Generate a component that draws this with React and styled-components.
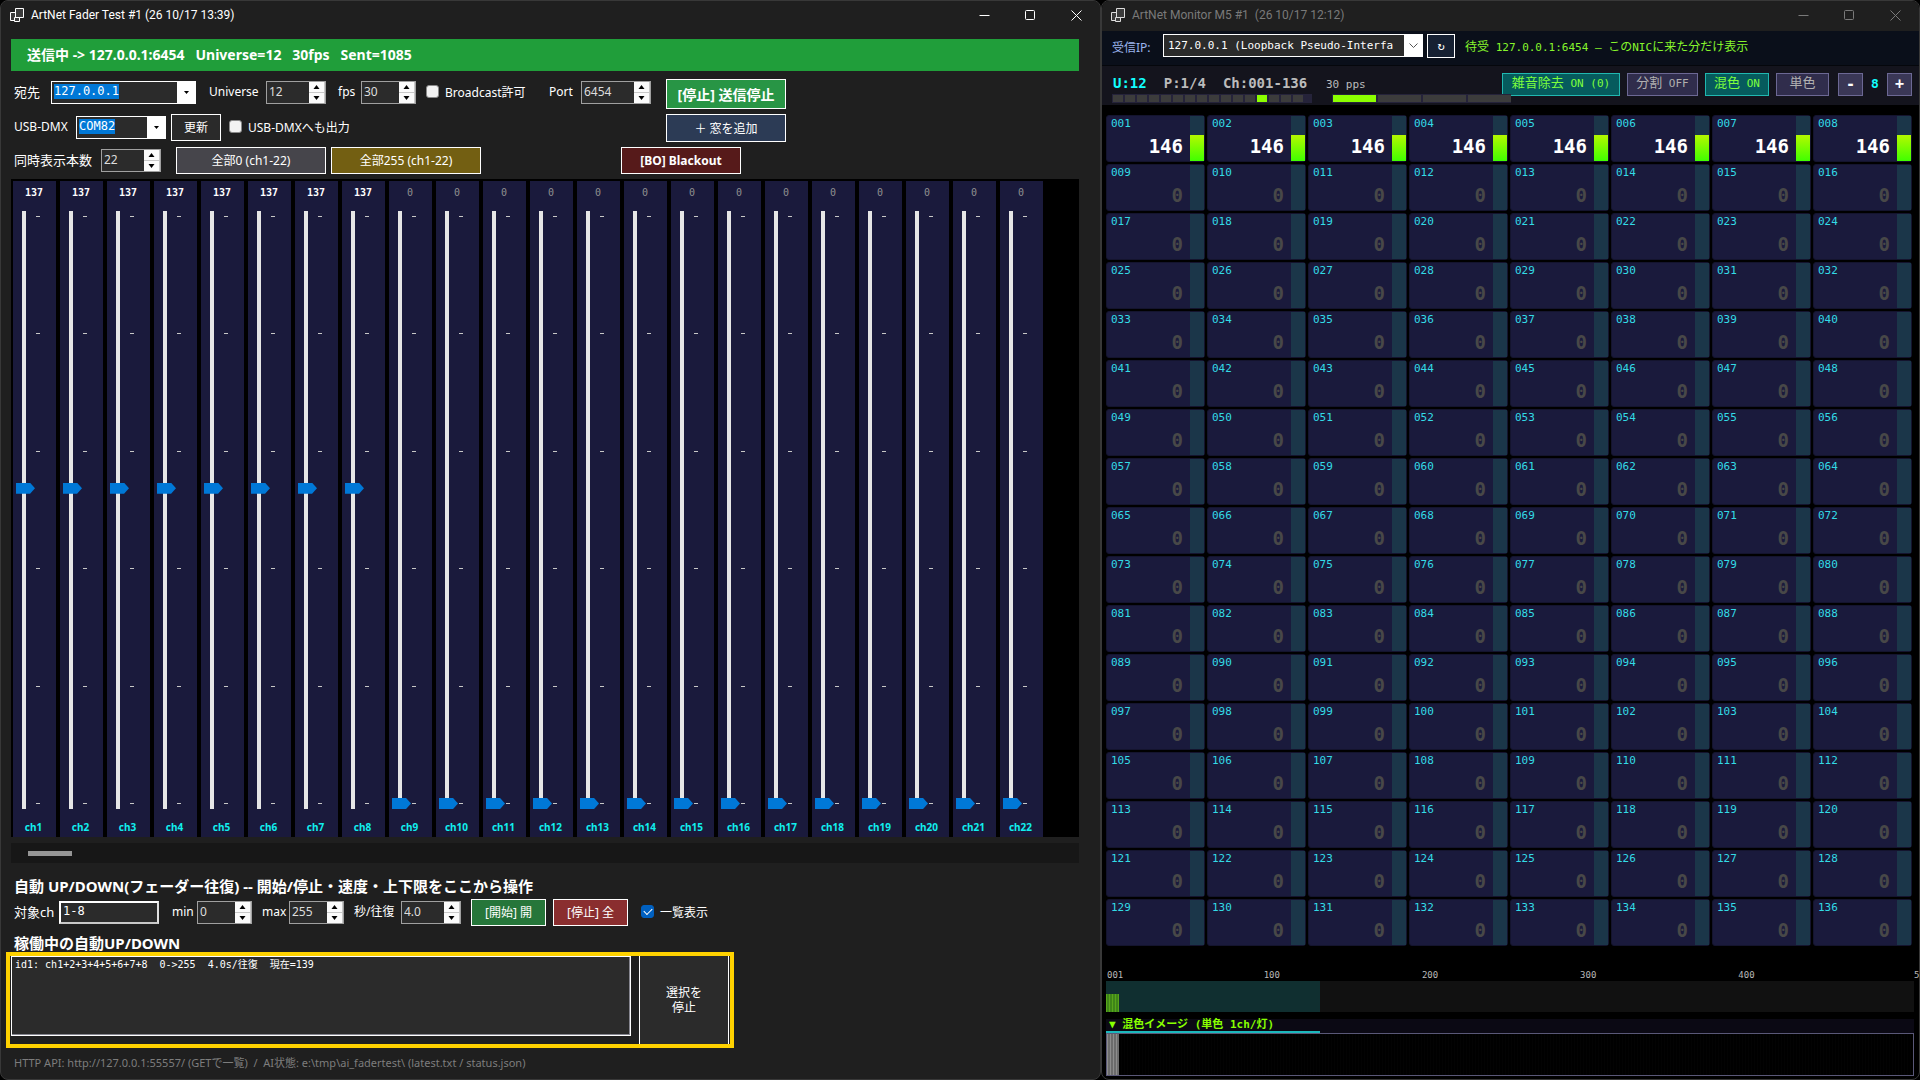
import React, { useState } from "react";
import styled, { createGlobalStyle, css } from "styled-components";

const sans = `"Noto Sans", "Noto Sans CJK JP", sans-serif`;
const mono = `"DejaVu Sans Mono", "Noto Sans CJK JP", monospace`;

const GlobalStyle = createGlobalStyle`
  * {
    box-sizing: border-box;
  }
  body {
    margin: 0;
    background: #000;
    color: #fff;
    font-family: ${sans};
    font-size: 12px;
    overflow: hidden;
  }
  button, input, select {
    margin: 0;
    padding: 0;
    font: inherit;
    color: inherit;
    border-radius: 0;
    outline: none;
  }
  p, h2, ul {
    margin: 0;
    padding: 0;
  }
`;

const Desktop = styled.div`
  display: grid;
  grid-template-columns: 1101fr 819fr;
  height: 100vh;
`;

const Window = styled.section`
  display: flex;
  flex-direction: column;
  min-width: 0;
  border: 1px solid #383838;
  border-radius: 8px;
  background: ${({ $bg }) => $bg};
  overflow: hidden;
`;

const TitleBar = styled.header`
  display: flex;
  align-items: flex-start;
  flex: none;
  height: 30px;
  padding: 0 1px 0 9px;
  background: #1f1f1f;
  color: ${({ $active }) => ($active ? "#fff" : "#7a7a7a")};
  white-space: pre;

  & > svg {
    margin-top: 7px;
  }
`;

const TitleText = styled.span`
  flex: 1;
  margin-left: 7px;
  font-family: Roboto, "Noto Sans CJK JP", sans-serif;
  line-height: 29px;
`;

const CaptionButton = styled.button`
  display: grid;
  place-items: center;
  width: 46px;
  height: 29px;
  border: 0;
  background: none;
`;

const FaderBody = styled.div`
  display: flex;
  flex-direction: column;
  flex: 1;
  min-height: 0;
  padding: 8px 21px 0 10px;
`;

const StatusBanner = styled.p`
  flex: none;
  padding-left: 16px;
  margin-bottom: 8px;
  background: #209e3a;
  font-size: 14px;
  font-weight: 700;
  line-height: 32px;
  white-space: pre;
`;

const Rows = styled.div`
  display: grid;
  gap: 5px;
  margin-bottom: 5px;
`;

const ControlRow = styled.div`
  display: grid;
  grid-template-columns: ${({ $columns }) => $columns};
  align-items: start;
  min-height: 27px;
  padding-left: 3px;
  white-space: nowrap;
`;

const Label = styled.label`
  font-size: ${({ $large }) => ($large ? "13px" : "12px")};
  line-height: 26px;
`;

const CheckLabel = styled.label`
  display: flex;
  align-items: center;
  gap: 6px;
  height: 25px;
`;

const CheckBox = styled.input.attrs({ type: "checkbox" })`
  appearance: none;
  width: 13px;
  height: 13px;
  border: 1px solid #8a8a8a;
  border-radius: 3px;
  background: #f3f3f3;

  &:checked {
    border-color: #0060c0;
    background: #0060c0;
  }
  &:checked::before {
    content: "";
    display: block;
    width: 7px;
    height: 4px;
    margin: 2px;
    border: solid #fff;
    border-width: 0 0 1px 1px;
    transform: rotate(-45deg);
  }
`;

const PushButton = styled.button`
  width: ${({ $width }) => $width}px;
  height: ${({ $height }) => $height || 27}px;
  padding-bottom: 1px;
  border: 1px solid #fff;
  background: ${({ $bg }) => $bg || "#2a2a2a"};
  font-size: ${({ $large }) => ($large ? "14px" : "12px")};
  font-weight: ${({ $bold }) => ($bold ? 700 : 400)};
  white-space: nowrap;
`;

const ComboBox = styled.div`
  display: grid;
  grid-template-columns: 1fr 18px;
  width: ${({ $width }) => $width}px;
  height: 23px;
  margin-top: ${({ $top }) => $top || 0}px;
  border: 1px solid #fff;
  background: #2b2b2b;
`;

const ComboSelect = styled.select`
  grid-area: 1 / 1 / 2 / 3;
  appearance: none;
  width: 100%;
  padding: 0 18px 3px 2px;
  border: 0;
  background: none;
  font-family: ${mono};
  ${({ $selected }) =>
    $selected
      ? css`
          background: linear-gradient(#0078d7, #0078d7) 2px 2px / ${$selected}px 15px no-repeat;
        `
      : css`
          padding: 0 18px 1px 4px;
          font-size: 11px;
        `}
`;

const ComboArrow = styled.span`
  grid-area: 1 / 2 / 2 / 3;
  display: grid;
  place-items: center;
  background: #fff;
  pointer-events: none;
`;

const SpinBox = styled.div`
  display: grid;
  grid-template-columns: 1fr 16px;
  width: ${({ $width }) => $width}px;
  height: 23px;
  margin-top: 2px;
  border: 1px solid #a0a0a0;
  background: #2b2b2b;
`;

const SpinInput = styled.input`
  width: 100%;
  min-width: 0;
  padding: 0 0 3px 2px;
  border: 0;
  background: none;
  color: #ddd;
`;

const SpinButtons = styled.span`
  display: grid;
  grid-template-rows: 1fr 1fr;
  gap: 1px;
  padding-right: 1px;
  background: #c8c8c8;
`;

const SpinButton = styled.button`
  display: grid;
  place-items: center;
  border: 0;
  background: #fbfbfb;
`;

const TextBox = styled.input`
  width: 100px;
  height: 23px;
  margin-top: 2px;
  padding: 0 0 3px 2px;
  border: 2px solid #fff;
  border-bottom-color: #c8c8c8;
  border-right-color: #e0e0e0;
  background: #2b2b2b;
  font-family: ${mono};
  font-size: 12px;
`;

const FaderPanel = styled.div`
  display: flex;
  gap: 4px;
  flex: 1;
  min-height: 0;
  padding: 2px 0 0 2px;
  background: #000;
`;

const FaderStrip = styled.div`
  display: grid;
  grid-template-columns: 19px 1fr;
  grid-template-rows: 30px 1fr 28px;
  column-gap: 1px;
  width: 43px;
  padding-left: 3px;
  background: #1a1a3c;
`;

const FaderValue = styled.output`
  grid-column: 1 / 3;
  padding-right: 4px;
  font-family: ${mono};
  font-size: 10px;
  font-weight: ${({ $on }) => ($on ? 700 : 400)};
  line-height: 24px;
  text-align: center;
  color: ${({ $on }) => ($on ? "#fff" : "#909090")};
`;

const FaderInput = styled.input.attrs({ type: "range", min: 0, max: 255 })`
  appearance: none;
  writing-mode: vertical-lr;
  direction: rtl;
  width: 19px;
  height: 100%;
  background: linear-gradient(#e6e6e6, #e6e6e6) 6px 0 / 4px 100% no-repeat;

  &::-webkit-slider-runnable-track {
    width: 19px;
    height: 100%;
  }
  &::-webkit-slider-thumb {
    appearance: none;
    width: 19px;
    height: 11px;
    background: #0078d7;
    clip-path: polygon(0 0, 74% 0, 100% 50%, 74% 100%, 0 100%);
  }
`;

const Ticks = styled.div`
  display: flex;
  flex-direction: column;
  justify-content: space-between;
  padding: 5px 0;
`;

const Tick = styled.i`
  width: 4px;
  height: 1px;
  background: #c8c8c8;
`;

const FaderName = styled.label`
  grid-column: 1 / 3;
  padding-right: 5px;
  font-size: 10px;
  font-weight: 700;
  line-height: 36px;
  text-align: center;
  color: #1ee;
`;

const ScrollTrack = styled.div`
  flex: none;
  height: 20px;
  margin-top: 6px;
  padding: 8px 17px;
  background: #171717;
`;

const ScrollThumb = styled.div`
  width: 44px;
  height: 5px;
  background: #969696;
`;

const Heading = styled.h2`
  margin: ${({ $spaced }) => ($spaced ? "14px 0 4px" : "8px 0 0")};
  padding-left: 3px;
  font-size: 15px;
  font-weight: 700;
  line-height: 18px;
  white-space: nowrap;
`;

const Highlight = styled.div`
  display: flex;
  gap: 8px;
  width: 728px;
  height: 96px;
  margin-left: -5px;
  padding-left: 1px;
  border: 4px solid #ffd200;
`;

const JobList = styled.ul`
  width: 620px;
  height: 80px;
  padding: 0 3px;
  border: 1px solid #fff;
  box-shadow: inset -1px -1px #85858f;
  background: #2b2b2b;
  list-style: none;
  font-family: ${mono};
  font-size: 10px;
  line-height: 15px;
  white-space: pre;
`;

const StopJobButton = styled.button`
  width: 90px;
  border: solid #fff;
  border-width: 0 1px;
  background: #2b2b2b;
  line-height: 15px;
`;

const FootNote = styled.p`
  height: 31px;
  padding-left: 3px;
  color: #7d7d7d;
  font-size: 11px;
  line-height: 29px;
  white-space: pre;
`;

const SourceBar = styled.div`
  display: flex;
  flex: none;
  align-items: center;
  height: 35px;
  padding: 0 7px 5px 10px;
  border-bottom: 1px solid #05070c;
  background: #0a0f1a;
  white-space: pre;
`;

const SourceLabel = styled.label`
  width: 51px;
  padding-top: 2px;
  color: #9ab4ec;
`;

const ReloadButton = styled.button`
  width: 28px;
  height: 24px;
  margin: 0 10px 0 4px;
  border: 1px solid #fff;
  background: #162032;
  font-family: ${mono};
`;

const ListenText = styled.span`
  color: #86f52c;
  font-family: ${mono};
  font-size: 12px;
`;

const Small = styled.span`
  font-size: 11px;
`;

const MonitorBar = styled.div`
  display: flex;
  flex: none;
  height: 39px;
  padding: 6px 7px 0 10px;
  background: #14141d;
  font-family: ${mono};
`;

const Meter = styled.div`
  position: relative;
  display: grid;
  grid-template-rows: 22px 9px;
  width: ${({ $width }) => $width}px;
  margin-right: ${({ $after }) => $after}px;
`;

const MeterText = styled.div`
  display: flex;
  gap: 17px;
  padding-left: 1px;
  color: #bbb;
  font-size: 14px;
  font-weight: 700;
  line-height: 22px;
`;

const Universe = styled.span`
  color: #1ff;
`;

const Rate = styled.span`
  margin-left: -7px;
  padding-top: 3px;
  font-size: 11px;
  font-weight: 400;
  line-height: 20px;
`;

const Segments = styled.div`
  display: grid;
  grid-template-columns: repeat(${({ $count }) => $count}, 1fr);
  gap: 2px;
  padding: 1px ${({ $tail }) => $tail || 0}px 1px 1px;
  background: #25233a;
`;

const Segment = styled.i`
  background: ${({ $on }) => ($on ? "#8cff00" : "#3c3c3c")};
`;

const ModeButtons = styled.div`
  display: flex;
  gap: 7px;
  margin: 1px 0 0 auto;
`;

const ModeButton = styled.button`
  width: ${({ $width }) => $width}px;
  height: 23px;
  padding-bottom: 4px;
  border: 1px solid ${({ $on }) => ($on ? "#20b8b0" : "#6c6894")};
  background: ${({ $on }) => ($on ? "#065b5d" : "#302d4c")};
  color: ${({ $on }) => ($on ? "#7dff3c" : "#b0b0b0")};
  font-size: 13px;
  line-height: 17px;
  white-space: nowrap;
`;

const Stepper = styled.div`
  display: grid;
  grid-template-columns: 25px 24px 25px;
  margin-left: 2px;
  line-height: 21px;
  text-align: center;
`;

const StepButton = styled.button`
  height: 23px;
  border: 1px solid #6c6894;
  background: #3a3756;
  font-size: 15px;
  font-weight: 700;
  line-height: 19px;
`;

const StepValue = styled.output`
  color: #1ff;
  font-size: 13px;
  font-weight: 700;
`;

const ChannelGrid = styled.div`
  display: grid;
  grid-template-columns: repeat(8, 1fr);
  grid-auto-rows: 1fr;
  gap: 2px;
  flex: 1;
  min-height: 0;
  padding: 10px 7px 0 4px;
  font-family: ${mono};
`;

const Cell = styled.div`
  display: grid;
  grid-template-columns: 1fr 14px;
  grid-template-rows: 16px 1fr;
  min-height: 0;
  border: 1px solid #14142e;
  border-radius: 3px;
  background: #1a1a3c;
`;

const CellIndex = styled.span`
  padding-left: 4px;
  color: #33dbe6;
  font-size: 11px;
  line-height: 16px;
`;

const CellValue = styled.span`
  grid-column: 1;
  padding-right: 7px;
  color: ${({ $on }) => ($on ? "#fff" : "#484848")};
  font-size: 19px;
  font-weight: 700;
  line-height: 28px;
  text-align: right;
`;

const Gauge = styled.div`
  grid-area: 1 / 2 / 3 / 3;
  display: flex;
  align-items: flex-end;
  background: #1b3649;
`;

const GaugeFill = styled.i`
  width: 100%;
  background: linear-gradient(#b4f800, #40ff00);
`;

const Overview = styled.div`
  flex: none;
  padding: 23px 5px 3px 4px;
  font-family: ${mono};
`;

const Scale = styled.div`
  display: grid;
  grid-template-columns: 99fr 100fr 100fr 100fr 111fr 0;
  padding-left: 1px;
  color: #b8b8b8;
  font-size: 9px;
  line-height: 12px;
`;

const LevelMap = styled.div`
  display: flex;
  align-items: flex-end;
  height: 31px;
  background: linear-gradient(90deg, #102f30 26.5%, #111 26.5%);
`;

const LevelBars = styled.i`
  width: 13px;
  height: 18px;
  background: repeating-linear-gradient(90deg, #57a51a 0 1px, #3e8518 1px 3px);
`;

const MixTitle = styled.p`
  height: 14px;
  margin-top: 7px;
  padding-left: 3px;
  background:
    linear-gradient(#1bb8bc, #1bb8bc) 0 100% / 26.5% 2px no-repeat,
    #0b0914;
  color: #8f0;
  font-size: 11px;
  font-weight: 700;
  line-height: 11px;
`;

const MixStrip = styled.div`
  height: 43px;
  border: 1px solid #5a5878;
  background: repeating-linear-gradient(90deg, #000 0 2px, #030303 2px 3px);
`;

const MixLamps = styled.i`
  display: block;
  width: 12px;
  height: 100%;
  background: repeating-linear-gradient(90deg, #8c8c8c 0 1px, #6b6b6b 1px 3px);
`;

const AppIcon = ({ active }) => (
  <svg width="14" height="14" viewBox="0 0 14 14" fill="#3b3b3b" stroke={active ? "#fff" : "#ddd"}>
    <path d="M.5 4.5h5v8h-5z" />
    <path d="M5.5.5h8v9h-8z" />
    <path d="M4.5 9.5h5v4h-5z" />
  </svg>
);

const Triangle = ({ up }) => (
  <svg width="7" height="4" viewBox="0 0 7 4" fill="#000">
    <path d={up ? "M3.5 0 6.5 4H.5z" : "M.5 0h6l-3 4z"} />
  </svg>
);

const WindowTitle = ({ text, active }) => (
  <TitleBar $active={active}>
    <AppIcon active={active} />
    <TitleText>{text}</TitleText>
    <CaptionButton aria-label="Minimize">
      <svg width="11" height="11" stroke="currentColor">
        <path d="M.5 5.5h10" />
      </svg>
    </CaptionButton>
    <CaptionButton aria-label="Maximize">
      <svg width="11" height="11" fill="none" stroke="currentColor">
        <rect x=".5" y=".5" width="9" height="9" rx="1" />
      </svg>
    </CaptionButton>
    <CaptionButton aria-label="Close">
      <svg width="11" height="11" stroke="currentColor">
        <path d="M.5.5l10 10M10.5.5l-10 10" />
      </svg>
    </CaptionButton>
  </TitleBar>
);

const Combo = ({ id, value, width, selected }) => (
  <ComboBox $width={width} $top={2}>
    <ComboSelect id={id} $selected={selected}>
      <option>{value}</option>
    </ComboSelect>
    <ComboArrow>
      <svg width="5" height="3" viewBox="0 0 5 3">
        <path d="M0 0h5L2.5 3z" />
      </svg>
    </ComboArrow>
  </ComboBox>
);

const Spin = ({ id, start, width, step = 1 }) => {
  const digits = step < 1 ? 1 : 0;
  const [value, setValue] = useState(start);
  const move = (by) => setValue((v) => (Number(v) + by).toFixed(digits));
  return (
    <SpinBox $width={width}>
      <SpinInput id={id} value={value} onChange={(e) => setValue(e.target.value)} />
      <SpinButtons>
        <SpinButton aria-label="Up" onClick={() => move(step)}>
          <Triangle up />
        </SpinButton>
        <SpinButton aria-label="Down" onClick={() => move(-step)}>
          <Triangle />
        </SpinButton>
      </SpinButtons>
    </SpinBox>
  );
};

const Fader = ({ channel, start }) => {
  const [value, setValue] = useState(start);
  const id = `fader-${channel}`;
  return (
    <FaderStrip>
      <FaderValue $on={value > 0}>{value}</FaderValue>
      <FaderInput id={id} value={value} onChange={(e) => setValue(Number(e.target.value))} />
      <Ticks>
        {Array.from({ length: 6 }, (_, i) => (
          <Tick key={i} />
        ))}
      </Ticks>
      <FaderName htmlFor={id}>ch{channel}</FaderName>
    </FaderStrip>
  );
};

const FaderWindow = () => (
  <Window $bg='#1f1f1f'>
    <WindowTitle active text='ArtNet Fader Test #1 (26 10/17 13:39)' />
    <FaderBody>
      <StatusBanner>{"送信中 -> 127.0.0.1:6454   Universe=12   30fps   Sent=1085"}</StatusBanner>
      <Rows>
        <ControlRow $columns='37px 158px 57px 72px 23px 65px 123px 32px 85px 120px'>
          <Label $large htmlFor='dest'>宛先</Label>
          <Combo id='dest' value='127.0.0.1' width={145} selected={65} />
          <Label htmlFor='universe'>Universe</Label>
          <Spin id='universe' start='12' width={60} />
          <Label htmlFor='fps'>fps</Label>
          <Spin id='fps' start='30' width={55} />
          <CheckLabel>
            <CheckBox />
            Broadcast許可
          </CheckLabel>
          <Label htmlFor='port'>Port</Label>
          <Spin id='port' start='6454' width={70} />
          <PushButton $width={120} $height={30} $bg='#289545' $bold $large>[停止] 送信停止</PushButton>
        </ControlRow>
        <ControlRow $columns='62px 95px 58px 437px 120px'>
          <Label htmlFor='dmx'>USB-DMX</Label>
          <Combo id='dmx' value='COM82' width={90} selected={36} />
          <PushButton $width={50}>更新</PushButton>
          <CheckLabel>
            <CheckBox />
            USB-DMXへも出力
          </CheckLabel>
          <PushButton $width={120} $height={28} $bg='#2c3b55'>＋ 窓を追加</PushButton>
        </ControlRow>
        <ControlRow $columns='87px 75px 155px 290px 120px'>
          <Label $large htmlFor='count'>同時表示本数</Label>
          <Spin id='count' start='22' width={60} />
          <PushButton $width={150} $bg='#46454b'>全部0 (ch1-22)</PushButton>
          <PushButton $width={150} $bg='#735f12'>全部255 (ch1-22)</PushButton>
          <PushButton $width={120} $bg='#561a1a' $bold>[BO] Blackout</PushButton>
        </ControlRow>
      </Rows>
      <FaderPanel>
        {Array.from({ length: 22 }, (_, i) => (
          <Fader key={i} channel={i + 1} start={i < 8 ? 137 : 0} />
        ))}
      </FaderPanel>
      <ScrollTrack>
        <ScrollThumb />
      </ScrollTrack>
      <Heading $spaced>自動 UP/DOWN(フェーダー往復) -- 開始/停止・速度・上下限をここから操作</Heading>
      <ControlRow $columns='45px 113px 25px 65px 27px 65px 47px 70px 82px 88px auto'>
        <Label $large htmlFor='target'>対象ch</Label>
        <TextBox id='target' defaultValue='1-8' />
        <Label htmlFor='min'>min</Label>
        <Spin id='min' start='0' width={55} />
        <Label htmlFor='max'>max</Label>
        <Spin id='max' start='255' width={55} />
        <Label htmlFor='period'>秒/往復</Label>
        <Spin id='period' start='4.0' width={60} step={0.5} />
        <PushButton $width={75} $bg='#26763a'>[開始] 開</PushButton>
        <PushButton $width={75} $bg='#8a2e2f'>[停止] 全</PushButton>
        <CheckLabel>
          <CheckBox defaultChecked />
          一覧表示
        </CheckLabel>
      </ControlRow>
      <Heading>稼働中の自動UP/DOWN</Heading>
      <Highlight>
        <JobList>
          <li>{"id1: ch1+2+3+4+5+6+7+8  0->255  4.0s/往復  現在=139"}</li>
        </JobList>
        <StopJobButton>
          選択を
          <br />
          停止
        </StopJobButton>
      </Highlight>
      <FootNote>
        {"HTTP API: http://127.0.0.1:55557/ (GETで一覧)  /  AI状態: e:\\tmp\\ai_fadertest\\ (latest.txt / status.json)"}
      </FootNote>
    </FaderBody>
  </Window>
);

const ChannelCell = ({ channel, value }) => (
  <Cell>
    <CellIndex>{String(channel).padStart(3, "0")}</CellIndex>
    <CellValue $on={value > 0}>{value}</CellValue>
    <Gauge>
      <GaugeFill style={{ height: `${(value / 255) * 100}%` }} />
    </Gauge>
  </Cell>
);

const MonitorWindow = () => (
  <Window $bg='#000'>
    <WindowTitle text='ArtNet Monitor M5 #1  (26 10/17 12:12)' />
    <SourceBar>
      <SourceLabel htmlFor='nic'>受信IP:</SourceLabel>
      <ComboBox $width={260}>
        <ComboSelect id='nic'>
          <option>127.0.0.1 (Loopback Pseudo-Interfa</option>
        </ComboSelect>
        <ComboArrow>
          <svg width="9" height="6" fill="none" stroke="#555">
            <path d="M.5.5l4 4 4-4" />
          </svg>
        </ComboArrow>
      </ComboBox>
      <ReloadButton aria-label='Reload'>↻</ReloadButton>
      <ListenText>
        待受<Small> 127.0.0.1:6454 — </Small>この<Small>NIC</Small>に来た分だけ表示
      </ListenText>
    </SourceBar>
    <MonitorBar>
      <Meter $width={200} $after={20}>
        <MeterText>
          <Universe>U:12</Universe>
          <span>P:1/4</span>
          <span>Ch:001-136</span>
        </MeterText>
        <Segments $count={16} $tail={9}>
          {Array.from({ length: 16 }, (_, i) => (
            <Segment key={i} $on={i === 12} />
          ))}
        </Segments>
      </Meter>
      <Meter $width={179} $after={-9}>
        <MeterText>
          <Rate>30 pps</Rate>
        </MeterText>
        <Segments $count={4}>
          {Array.from({ length: 4 }, (_, i) => (
            <Segment key={i} $on={i === 0} />
          ))}
        </Segments>
      </Meter>
      <ModeButtons>
        <ModeButton $on $width={118}>雑音除去<Small> ON (0)</Small></ModeButton>
        <ModeButton $width={71}>分割<Small> OFF</Small></ModeButton>
        <ModeButton $on $width={64}>混色<Small> ON</Small></ModeButton>
        <ModeButton $width={53}>単色</ModeButton>
        <Stepper>
          <StepButton>-</StepButton>
          <StepValue>8</StepValue>
          <StepButton>+</StepButton>
        </Stepper>
      </ModeButtons>
    </MonitorBar>
    <ChannelGrid>
      {Array.from({ length: 136 }, (_, i) => (
        <ChannelCell key={i} channel={i + 1} value={i < 8 ? 146 : 0} />
      ))}
    </ChannelGrid>
    <Overview>
      <Scale>
        {["001", "100", "200", "300", "400", "512"].map((mark) => (
          <span key={mark}>{mark}</span>
        ))}
      </Scale>
      <LevelMap>
        <LevelBars />
      </LevelMap>
      <MixTitle>▼ 混色イメージ (単色 1ch/灯)</MixTitle>
      <MixStrip>
        <MixLamps />
      </MixStrip>
    </Overview>
  </Window>
);

export default function App() {
  return (
    <>
      <GlobalStyle />
      <Desktop>
        <FaderWindow />
        <MonitorWindow />
      </Desktop>
    </>
  );
}
